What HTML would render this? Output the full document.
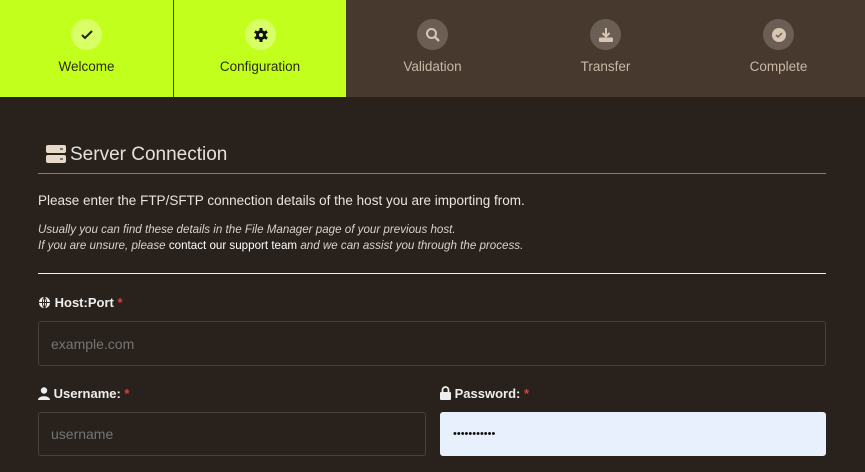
<!DOCTYPE html>
<html><head><style>
*{margin:0;padding:0;box-sizing:border-box}
body{width:865px;height:472px;overflow:hidden;background:#29211b;font-family:"Liberation Sans",sans-serif;position:relative}
.hdr{position:absolute;left:0;top:0;width:865px;height:97px;background:#47392e}
.st{position:absolute;top:0;height:97px;width:173px;text-align:center}
.st.on{background:#c3ff1c}
.ic{position:absolute;left:71px;top:19px;width:31px;height:31px;border-radius:50%;background:#6b5f55;display:flex;align-items:center;justify-content:center}
.on .ic{background:#d9ff66}
.lb{position:absolute;left:0;right:0;top:59px;font-size:13.5px;color:#c9b8a8}
.on .lb{color:#2a2a10}
.a{position:absolute;color:#ddd}
input{position:absolute;border:1px solid #4a3f35;border-radius:3px;background:#29211b;color:#6f6458;font-size:14px;padding-left:12px;font-family:"Liberation Sans",sans-serif;outline:none}
.req{color:#e0403a}
</style></head><body>
<div class="hdr">
<div class="st on" style="left:0"><div class="ic"><svg width="14" height="14" viewBox="0 0 14 14"><path d="M2 7l3 3 7-7" stroke="#222" stroke-width="2" fill="none"/></svg></div><div class="lb">Welcome</div></div>
<div class="st on" style="left:174px;width:172px"><div class="ic"><svg width="16" height="16" viewBox="0 0 16 16"><g fill="#111"><circle cx="8" cy="8" r="5"/><rect x="6.5" y="1" width="3" height="14"/><rect x="6.5" y="1" width="3" height="14" transform="rotate(60 8 8)"/><rect x="6.5" y="1" width="3" height="14" transform="rotate(120 8 8)"/></g><circle cx="8" cy="8" r="2" fill="#d9ff66"/></svg></div><div class="lb">Configuration</div></div>
<div class="st" style="left:346px"><div class="ic"><svg width="16" height="16" viewBox="0 0 16 16"><circle cx="6.5" cy="6.5" r="4.5" stroke="#d9c6b2" stroke-width="2" fill="none"/><path d="M10 10l4 4" stroke="#d9c6b2" stroke-width="2.4"/></svg></div><div class="lb">Validation</div></div>
<div class="st" style="left:519px"><div class="ic"><svg width="16" height="16" viewBox="0 0 16 16"><path d="M8 1v8M4.5 6L8 9.5 11.5 6" stroke="#d9c6b2" stroke-width="2" fill="none"/><rect x="1" y="10.5" width="14" height="4.5" rx="1" fill="#d9c6b2"/></svg></div><div class="lb">Transfer</div></div>
<div class="st" style="left:692px"><div class="ic"><svg width="16" height="16" viewBox="0 0 16 16"><circle cx="8" cy="8" r="7" fill="#d9c6b2"/><path d="M5 8l2 2 4-4" stroke="#6b5f55" stroke-width="1.5" fill="none"/></svg></div><div class="lb">Complete</div></div>
</div>
<svg style="position:absolute;left:46px;top:145px" width="20" height="18" viewBox="0 0 20 18"><rect x="0" y="0" width="20" height="8" rx="2" fill="#e8d8c8"/><rect x="0" y="10" width="20" height="8" rx="2" fill="#e8d8c8"/><rect x="14" y="3" width="3" height="2" fill="#777"/><rect x="14" y="13" width="3" height="2" fill="#777"/></svg>
<div class="a" style="left:70px;top:144px;font-size:19px;color:#e5e0dc">Server Connection</div>
<div style="position:absolute;left:38px;top:173px;width:788px;height:1px;background:#8a7a6a"></div>
<div class="a" style="left:38px;top:193px;font-size:13.5px;color:#e8e4e0">Please enter the FTP/SFTP connection details of the host you are importing from.</div>
<div class="a" style="left:38px;top:222px;font-size:11.6px;font-style:italic;color:#d8d2cc;line-height:16px">Usually you can find these details in the File Manager page of your previous host.<br>If you are unsure, please <b style="font-style:normal;color:#fff;font-weight:normal">contact our support team</b> and we can assist you through the process.</div>
<div style="position:absolute;left:38px;top:273px;width:788px;height:1px;background:#eee"></div>
<div class="a" style="left:38px;top:295px;font-size:13px;font-weight:bold;color:#eee"><svg width="13" height="13" viewBox="0 0 14 14" style="vertical-align:-2px"><circle cx="7" cy="7" r="6" fill="#eee"/><path d="M1 7h12M7 1v12M7 1c-3 3-3 9 0 12M7 1c3 3 3 9 0 12" stroke="#29211b" stroke-width="1" fill="none"/></svg> Host:Port <span class="req">*</span></div>
<input style="left:38px;top:321px;width:788px;height:45px" placeholder="example.com">
<div class="a" style="left:38px;top:386px;font-size:13px;font-weight:bold;color:#eee"><svg width="12" height="13" viewBox="0 0 12 13" style="vertical-align:-2px"><circle cx="6" cy="3.5" r="3.2" fill="#eee"/><path d="M0 13c0-5 12-5 12 0z" fill="#eee"/></svg> Username: <span class="req">*</span></div>
<div class="a" style="left:440px;top:386px;font-size:13px;font-weight:bold;color:#eee"><svg width="11" height="14" viewBox="0 0 11 14" style="vertical-align:-2px"><path d="M2.5 6V4a3 3 0 0 1 6 0v2" stroke="#eee" stroke-width="1.8" fill="none"/><rect x="0" y="6" width="11" height="8" rx="1" fill="#eee"/></svg> Password: <span class="req">*</span></div>
<input style="left:38px;top:412px;width:388px;height:44px" placeholder="username">
<input style="left:440px;top:412px;width:386px;height:44px;background:#e8f0fe;color:#111;border-color:#e8f0fe;font-size:11px" type="password" value="password123">
</body></html>
